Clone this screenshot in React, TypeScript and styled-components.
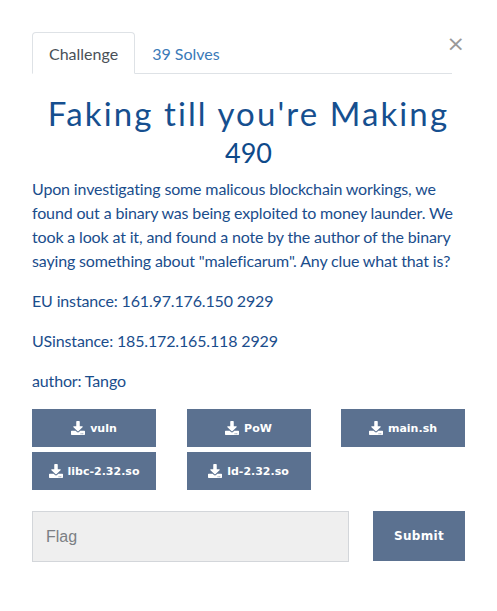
import styled, { createGlobalStyle } from 'styled-components';
import { FaDownload } from 'react-icons/fa';

const GlobalStyle = createGlobalStyle`
  html, body {
    margin: 0;
    padding: 0;
    background: #ffffff;
  }
  body {
    font-family: Lato, "Open Sans", sans-serif;
  }
`;

const Page = styled.div`
  padding: 32px 32px 0 32px;
  width: 433px;
`;

const Header = styled.div`
  display: flex;
  align-items: flex-start;
`;

const Tabs = styled.ul`
  flex: 1;
  display: flex;
  list-style: none;
  margin: 0;
  padding: 0;
  border-bottom: 1px solid #dee2e6;
  height: 41px;
`;

const Tab = styled.li<{ active?: boolean }>`
  box-sizing: border-box;
  height: 42px;
  padding: 0 16px;
  display: flex;
  align-items: center;
  font-size: 16px;
  color: ${(p) => (p.active ? '#495057' : '#3a7ab8')};
  border: 1px solid ${(p) => (p.active ? '#dee2e6' : 'transparent')};
  border-bottom-color: ${(p) => (p.active ? '#ffffff' : 'transparent')};
  border-radius: 4px 4px 0 0;
  background: ${(p) => (p.active ? '#ffffff' : 'transparent')};
`;

const Close = styled.button`
  width: 13px;
  padding: 0;
  border: none;
  background: none;
  color: #999999;
  font-size: 22px;
  line-height: 22px;
  margin-top: 1px;
  font-family: "DejaVu Sans", sans-serif;
  display: flex;
  justify-content: flex-end;
`;

const Title = styled.h2`
  margin: 19px 0 0;
  text-align: center;
  font-family: Lato, sans-serif;
  font-weight: 400;
  letter-spacing: 2.1px;
  font-size: 33px;
  line-height: 40px;
  color: #164f8f;
`;

const Value = styled.h3`
  margin: 2px 0 6px;
  text-align: center;
  font-weight: 400;
  font-size: 27px;
  line-height: 36px;
  color: #0e4a8a;
`;

const Description = styled.div`
  color: #1a4d8c;
  font-size: 16px;
  line-height: 24px;
  letter-spacing: -0.15px;

  p {
    margin: 0 0 16px;
  }
`;

const FileGrid = styled.div`
  display: grid;
  grid-template-columns: repeat(3, 124px);
  column-gap: 30.5px;
  row-gap: 5px;
  margin-top: 12px;
`;

const FileButton = styled.button`
  height: 38px;
  border: none;
  background: #5b7190;
  color: #ffffff;
  font-family: "DejaVu Sans", Verdana, sans-serif;
  font-weight: bold;
  font-size: 11px;
  display: flex;
  align-items: center;
  justify-content: center;
  gap: 5px;
  padding: 0;

  svg {
    width: 14px;
    height: 14px;
  }
`;

const SubmitRow = styled.div`
  display: flex;
  gap: 24px;
  margin-top: 21px;
`;

const FlagInput = styled.input`
  box-sizing: border-box;
  width: 317px;
  height: 51px;
  background: #efefef;
  border: 1px solid #d3d6da;
  padding: 0 13px;
  font-family: "Liberation Sans", Arial, sans-serif;
  font-size: 16px;
  color: #333;
  outline: none;

  &::placeholder {
    color: #7b7f84;
  }
`;

const SubmitButton = styled.button`
  width: 92px;
  height: 50px;
  border: none;
  background: #5b7190;
  color: #ffffff;
  font-family: "DejaVu Sans", Verdana, sans-serif;
  font-weight: bold;
  font-size: 12px;
  letter-spacing: 0.3px;
`;

const files = ['vuln', 'PoW', 'main.sh', 'libc-2.32.so', 'ld-2.32.so'];

export default function App() {
  return (
    <Page>
      <GlobalStyle />
      <Header>
        <Tabs>
          <Tab active>Challenge</Tab>
          <Tab>39 Solves</Tab>
        </Tabs>
        <Close>×</Close>
      </Header>
      <Title>Faking till you're Making</Title>
      <Value>490</Value>
      <Description>
        <p>
          Upon investigating some malicous blockchain workings, we found out a binary was being exploited to money
          launder. We took a look at it, and found a note by the author of the binary saying something about
          "maleficarum". Any clue what that is?
        </p>
        <p>EU instance: 161.97.176.150 2929</p>
        <p>USinstance: 185.172.165.118 2929</p>
        <p>author: Tango</p>
      </Description>
      <FileGrid>
        {files.map((f) => (
          <FileButton key={f}>
            <FaDownload />
            {f}
          </FileButton>
        ))}
      </FileGrid>
      <SubmitRow>
        <FlagInput placeholder="Flag" />
        <SubmitButton>Submit</SubmitButton>
      </SubmitRow>
    </Page>
  );
}
